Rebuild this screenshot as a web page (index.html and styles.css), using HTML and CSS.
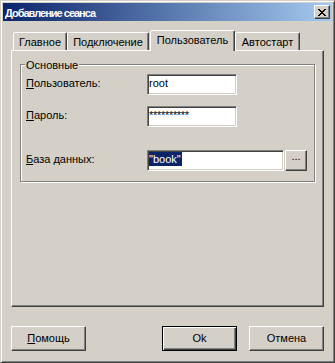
FILE: index.html
```html
<!DOCTYPE html>
<html>
<head>
<meta charset="utf-8">
<link rel="stylesheet" href="styles.css">
</head>
<body>
<div class="window">
  <div class="titlebar">
    <span class="title">Добавление сеанса</span>
    <span class="close"><svg width="8" height="7" viewBox="0 0 8 7" shape-rendering="crispEdges"><path d="M0 0h2v1h-2z M6 0h2v1h-2z M1 1h2v1h-2z M5 1h2v1h-2z M2 2h4v1h-4z M3 3h2v1h-2z M2 4h4v1h-4z M1 5h2v1h-2z M5 5h2v1h-2z M0 6h2v1h-2z M6 6h2v1h-2z" fill="#000"/></svg></span>
  </div>
  <div class="content">
    <div class="tabs">
      <div class="tab t1">Главное</div>
      <div class="tab t2">Подключение</div>
      <div class="tab t3 active">Пользователь</div>
      <div class="tab t4">Автостарт</div>
    </div>
    <div class="panel">
      <div class="group">
        <span class="caption">Основные</span>
        <div class="row">
          <span class="lbl"><u>П</u>ользователь:</span>
          <div class="edit e1">root</div>
        </div>
        <div class="row r2">
          <span class="lbl"><u>П</u>ароль:</span>
          <div class="edit e2 pwd">**********</div>
        </div>
        <div class="row r3">
          <span class="lbl"><u>Б</u>аза данных:</span>
          <div class="edit e3"><span class="sel">"book"</span></div>
          <div class="btn dots">...</div>
        </div>
      </div>
    </div>
    <div class="buttons">
      <div class="btn push"><span><u>П</u>омощь</span></div>
      <div class="btn push ok">Ok</div>
      <div class="btn push cancel">Отмена</div>
    </div>
  </div>
</div>
</body>
</html>
```
FILE: styles.css
```css
* { box-sizing: border-box; }
body {
  margin: 0;
  background: #d4d0c8;
  font-family: "Liberation Sans", Arial, sans-serif;
  font-size: 11px;
  color: #000;
}
.window {
  width: 335px;
  height: 363px;
  border: 1px solid;
  border-color: #d4d0c8 #404040 #404040 #d4d0c8;
  box-shadow: inset 1px 1px #fff, inset -1px -1px #808080;
  padding: 2px;
  background: #d4d0c8;
}
.titlebar {
  height: 18px;
  display: flex;
  align-items: center;
  justify-content: space-between;
  background: linear-gradient(to right, #0a246a, #a6caf0);
  padding: 0 2px;
}
.title {
  color: #fff;
  font-weight: 700;
  letter-spacing: -1px;
  line-height: 13px;
  padding-top: 2px;
}
.close {
  width: 16px;
  height: 14px;
  display: flex;
  align-items: center;
  justify-content: center;
  background: #d4d0c8;
  border: 1px solid;
  border-color: #fff #404040 #404040 #fff;
  box-shadow: inset -1px -1px #808080;
}
.content { padding: 9px 8px 0 8px; }
.tabs {
  display: flex;
  align-items: flex-end;
  height: 20px;
  padding-left: 2px;
  position: relative;
  z-index: 1;
}
.tab {
  height: 18px;
  border: 1px solid;
  border-bottom: none;
  border-color: #fff #404040 transparent #fff;
  box-shadow: inset -1px 0 #808080;
  border-radius: 2px 2px 0 0;
  padding-top: 3px;
  text-align: center;
  line-height: 13px;
  background: #d4d0c8;
  white-space: nowrap;
}
.tab.active { height: 21px; margin-bottom: -1px; margin-left: 1px; }
.t1 { width: 54px; }
.t2 { width: 82px; }
.t3 { width: 85px; }
.t4 { width: 65px; }
.panel {
  height: 257px;
  border: 1px solid;
  border-color: #fff #404040 #404040 #fff;
  box-shadow: inset -1px -1px #808080;
  padding: 13px 0 0 8px;
}
.group {
  position: relative;
  width: 295px;
  height: 118px;
  border: 1px solid #808080;
  box-shadow: inset 1px 1px #fff, 1px 1px #fff;
  padding: 9px 0 0 5px;
}
.caption {
  position: absolute;
  left: 4px;
  top: -6px;
  padding: 0 1px;
  background: #d4d0c8;
  line-height: 13px;
}
.row { display: flex; align-items: flex-start; height: 21px; }
.r2 { margin-top: 11px; }
.r3 { margin-top: 23px; }
.lbl { width: 121px; margin-top: 3px; line-height: 13px; white-space: nowrap; }
.edit {
  height: 21px;
  border: 1px solid;
  border-color: #808080 #fff #fff #808080;
  box-shadow: inset 1px 1px #404040, inset -1px -1px #d4d0c8;
  background: #fff;
  padding: 1px 1px 0 1px;
  line-height: 15px;
  white-space: nowrap;
  overflow: hidden;
}
.e1, .e2 { width: 90px; }
.e3 { width: 137px; }
.pwd { letter-spacing: -0.3px; }
.sel {
  display: inline-block;
  background: #0a246a;
  color: #fff;
  line-height: 14px;
  padding-right: 1px;
}
.btn {
  display: flex;
  align-items: center;
  justify-content: center;
  background: #d4d0c8;
  border: 1px solid;
  border-color: #fff #404040 #404040 #fff;
  box-shadow: inset -1px -1px #808080;
  line-height: 13px;
}
.dots { width: 22px; height: 21px; margin-left: 1px; padding-bottom: 9px; }
.buttons { display: flex; margin-top: 19px; }
.push { width: 75px; height: 25px; }
.ok {
  margin-left: auto;
  border-color: #000;
  box-shadow: inset 1px 1px #fff, inset -1px -1px #404040, inset -2px -2px #808080;
}
.cancel { margin-left: 12px; }
```
